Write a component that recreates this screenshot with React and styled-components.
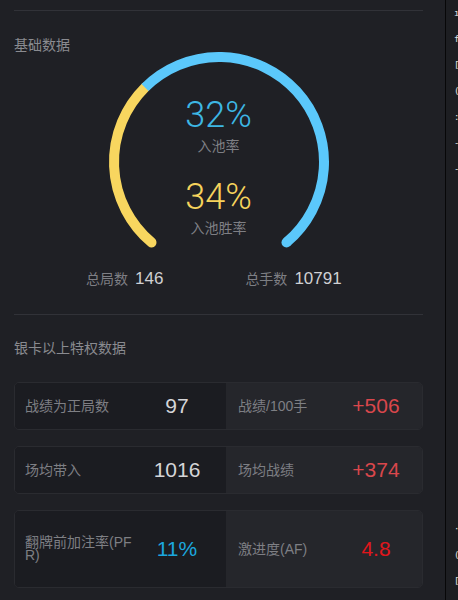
import React from "react";
import styled, { createGlobalStyle } from "styled-components";

const GlobalStyle = createGlobalStyle`
  html, body {
    margin: 0;
    padding: 0;
    background: #1f2025;
  }
  body {
    width: 458px;
    height: 600px;
    overflow: hidden;
    font-family: "Liberation Sans", "Noto Sans CJK SC", sans-serif;
    -webkit-font-smoothing: antialiased;
  }
`;

const Page = styled.div`
  display: flex;
  width: 458px;
  height: 600px;
  overflow: hidden;
`;

const Main = styled.div`
  width: 445px;
  flex: 0 0 445px;
  padding: 0 22px 0 14px;
  box-sizing: border-box;
  display: flex;
  flex-direction: column;
`;

const Divider = styled.div`
  flex: 0 0 1px;
  background: #070708;
`;

const Side = styled.div`
  flex: 1;
  background: #1d1e22;
  padding: 0 0 6px 8px;
  overflow: hidden;
  display: flex;
  flex-direction: column;
  color: #e2e2e4;
  font-family: "DejaVu Sans Mono", monospace;
  font-size: 9px;
  line-height: 26px;
  white-space: nowrap;
`;

const SideGap = styled.div`
  flex: 1;
`;

const Rule = styled.div`
  height: 1px;
  background: #313238;
  margin-top: ${({ $top }) => $top}px;
`;

const SectionTitle = styled.div`
  margin-top: ${({ $top }) => $top}px;
  font-size: 14px;
  line-height: 20px;
  color: #8a8b90;
`;

const Gauge = styled.div`
  position: relative;
  width: 230px;
  height: 200px;
  margin: -3px auto 0;
  align-self: center;
`;

const GaugeText = styled.div`
  position: absolute;
  inset: 0;
  display: flex;
  flex-direction: column;
  align-items: center;
  padding-top: 43px;
`;

const Percent = styled.div`
  font-family: Roboto, "Liberation Sans", sans-serif;
  font-weight: 300;
  font-size: 36px;
  line-height: 40px;
  color: ${({ $color }) => $color};
  margin-top: ${({ $top }) => $top || 0}px;
`;

const GaugeLabel = styled.div`
  margin-top: 1px;
  font-size: 14px;
  line-height: 20px;
  color: #7e7f84;
`;

const Stats = styled.div`
  margin-top: 15px;
  display: flex;
  gap: 82px;
  padding-left: 72px;
  line-height: 24px;
`;

const Stat = styled.div`
  display: flex;
  align-items: baseline;
  gap: 7px;
`;

const StatLabel = styled.span`
  font-size: 14px;
  color: #7e7f84;
`;

const StatValue = styled.span`
  font-size: 17px;
  color: #cfd0d3;
`;

const Cards = styled.div`
  margin-top: 24px;
  display: flex;
  flex-direction: column;
  gap: 16px;
`;

const Card = styled.div`
  display: grid;
  grid-template-columns: 211px 1fr;
  height: ${({ $h }) => $h}px;
  border: 1px solid #2a2b30;
  border-radius: 5px;
  overflow: hidden;
  box-sizing: border-box;
`;

const Cell = styled.div`
  display: flex;
  align-items: center;
  background: ${({ $light }) => ($light ? "#25262b" : "#1b1c21")};
  padding: ${({ $light }) => ($light ? "0 0 0 12px" : "0 6px 0 10px")};
`;

const CellLabel = styled.div`
  flex: 0 0 ${({ $w }) => $w}px;
  font-size: 14px;
  line-height: 13px;
  color: #7e7f84;
  word-break: break-all;
`;

const CellValue = styled.div`
  flex: 1;
  text-align: center;
  font-size: 21px;
  color: ${({ $color }) => $color || "#d4d5d8"};
`;

const GaugeArc = () => {
  const cx = 115;
  const cy = 110;
  const r = 105;
  const pt = (deg) => {
    const a = (deg * Math.PI) / 180;
    return [cx + r * Math.sin(a), cy - r * Math.cos(a)];
  };
  const arc = (from, to) => {
    const [x1, y1] = pt(from);
    const [x2, y2] = pt(to);
    const large = to - from > 180 ? 1 : 0;
    return `M ${x1} ${y1} A ${r} ${r} 0 ${large} 1 ${x2} ${y2}`;
  };
  const start = -140;
  const end = 140;
  const split = start + 0.34 * (end - start);
  const [ex, ey] = pt(end);
  return (
    <svg width="230" height="200" viewBox="0 0 230 200">
      <path d={arc(start, split)} fill="none" stroke="#f8d65f" strokeWidth="10" strokeLinecap="round" />
      <path d={arc(split, end)} fill="none" stroke="#5bc8fb" strokeWidth="10" strokeLinecap="butt" />
      <circle cx={ex} cy={ey} r="5" fill="#5bc8fb" />
    </svg>
  );
};

const rows = [
  {
    h: 48,
    left: { label: "战绩为正局数", value: "97" },
    right: { label: "战绩/100手", value: "+506", color: "#d9474c" },
  },
  {
    h: 48,
    left: { label: "场均带入", value: "1016" },
    right: { label: "场均战绩", value: "+374", color: "#d9474c" },
  },
  {
    h: 78,
    left: { label: "翻牌前加注率(PFR)", value: "11%", color: "#1ba7de" },
    right: { label: "激进度(AF)", value: "4.8", color: "#e0161c" },
  },
];

// narrow marks standing in for the clipped column at the window edge
const sideTop = ["ı", "f", "[", "(", ":", "-", "-"];
const sideBottom = ["·", "(", "["];

export default function App() {
  return (
    <>
      <GlobalStyle />
      <Page>
        <Main>
          <Rule $top={10} />
          <SectionTitle $top={24}>基础数据</SectionTitle>
          <Gauge>
            <GaugeArc />
            <GaugeText>
              <Percent $color="#3db7e4">32%</Percent>
              <GaugeLabel>入池率</GaugeLabel>
              <Percent $color="#f6d35c" $top={21}>34%</Percent>
              <GaugeLabel>入池胜率</GaugeLabel>
            </GaugeText>
          </Gauge>
          <Stats>
            <Stat>
              <StatLabel>总局数</StatLabel>
              <StatValue>146</StatValue>
            </Stat>
            <Stat>
              <StatLabel>总手数</StatLabel>
              <StatValue>10791</StatValue>
            </Stat>
          </Stats>
          <Rule $top={23} />
          <SectionTitle $top={23}>银卡以上特权数据</SectionTitle>
          <Cards>
            {rows.map((row) => (
              <Card key={row.left.label} $h={row.h}>
                <Cell>
                  <CellLabel $w={109}>{row.left.label}</CellLabel>
                  <CellValue $color={row.left.color}>{row.left.value}</CellValue>
                </Cell>
                <Cell $light>
                  <CellLabel $w={92}>{row.right.label}</CellLabel>
                  <CellValue $color={row.right.color}>{row.right.value}</CellValue>
                </Cell>
              </Card>
            ))}
          </Cards>
        </Main>
        <Divider />
        <Side>
          {sideTop.map((c, i) => (
            <div key={"t" + i}>{c}</div>
          ))}
          <SideGap />
          {sideBottom.map((c, i) => (
            <div key={"b" + i}>{c}</div>
          ))}
        </Side>
      </Page>
    </>
  );
}
